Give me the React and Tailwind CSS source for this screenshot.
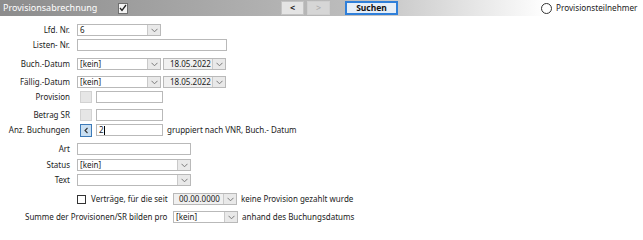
import React from "react";

const Chev = () => (
  <div className="w-[13px] h-full bg-[#e9e9e9] border-l border-[#c9c9c9] flex items-center justify-center shrink-0">
    <svg width="7" height="5" viewBox="0 0 7 5">
      <polyline points="0.5,0.8 3.5,3.8 6.5,0.8" fill="none" stroke="#7a7a7a" strokeWidth="1" />
    </svg>
  </div>
);

const Combo = ({ w, text = "", gray = false }) => (
  <div className={`h-full flex border border-[#b9b9b9] ${gray ? "bg-[#f0f0f0]" : "bg-white"}`} style={{ width: w }}>
    <div className="flex-1 pl-[2px] leading-[10px] flex items-center text-[#222] whitespace-nowrap">{text}</div>
    <Chev />
  </div>
);

const Input = ({ w, children }) => (
  <div className="h-full border border-[#b9b9b9] bg-white flex items-center pl-[2px]" style={{ width: w }}>
    {children}
  </div>
);

const Label = ({ children }) => (
  <div className="w-[70px] text-right shrink-0 text-[#222] whitespace-nowrap">{children}</div>
);

export default function App() {
  return (
    <div className="w-[643px] h-[240px] bg-white relative overflow-hidden text-[8px] leading-[12px] text-[#222]" style={{ fontFamily: '"Noto Sans", "Open Sans", sans-serif' }}>
      {/* header */}
      <div className="h-[16px] flex items-center bg-gradient-to-r from-[#8c8c8c] via-[#bdbdbd] via-55% to-[#ffffff] to-[85%]">
        <div className="pl-[3px] text-[9px] text-white w-[118px] whitespace-nowrap">Provisionsabrechnung</div>
        <div className="w-[10px] h-[11px] bg-[#f4f4f4] border border-[#6f6f6f] flex items-center justify-center">
          <svg width="8" height="8" viewBox="0 0 8 8">
            <polyline points="1,4 3,6.5 7,1" fill="none" stroke="#222" strokeWidth="1.3" />
          </svg>
        </div>
        <div className="ml-[153px] w-[23px] h-[14px] bg-[#e4e4e4] border border-[#c4c4c4] flex items-center justify-center text-[9px] font-bold text-[#222]">&lt;</div>
        <div className="ml-[3px] w-[23px] h-[14px] bg-[#d6d6d6] border border-[#cfcfcf] flex items-center justify-center text-[9px] text-[#a8a8a8]">&gt;</div>
        <div className="ml-[15px] w-[53px] h-[14px] bg-[#e6eef7] border-2 border-[#2f7fd9] flex items-center justify-center text-[8.5px] font-bold text-[#111]">Suchen</div>
        <div className="ml-[143px] w-[11px] h-[11px] rounded-full border border-[#333] bg-white"></div>
        <div className="ml-[4px] text-[8.2px] text-[#222] whitespace-nowrap">Provisionsteilnehmer</div>
      </div>

      {/* rows */}
      <div className="flex flex-col">
        <div className="mt-[8px] h-[12px] flex items-center">
          <Label>Lfd. Nr.</Label>
          <div className="ml-[7px] h-full"><Combo w={84} text="6" /></div>
        </div>
        <div className="mt-[3px] h-[12px] flex items-center">
          <Label>Listen- Nr.</Label>
          <div className="ml-[7px] h-full"><Input w={150} /></div>
        </div>
        <div className="mt-[7px] h-[12px] flex items-center">
          <Label>Buch.-Datum</Label>
          <div className="ml-[7px] h-full"><Combo w={84} text="[kein]" /></div>
          <div className="ml-[2px] h-full"><Combo w={63} text={<span className="pl-[4px]">18.05.2022</span>} gray /></div>
        </div>
        <div className="mt-[6px] h-[12px] flex items-center">
          <Label>Fällig.-Datum</Label>
          <div className="ml-[7px] h-full"><Combo w={84} text="[kein]" /></div>
          <div className="ml-[2px] h-full"><Combo w={63} text={<span className="pl-[4px]">18.05.2022</span>} gray /></div>
        </div>
        <div className="mt-[3px] h-[12px] flex items-center">
          <Label>Provision</Label>
          <div className="ml-[10px] w-[12px] h-full bg-[#e6e6e6] border border-[#d2d2d2]"></div>
          <div className="ml-[4px] h-full"><Input w={67} /></div>
        </div>
        <div className="mt-[6px] h-[12px] flex items-center">
          <Label>Betrag SR</Label>
          <div className="ml-[10px] w-[12px] h-full bg-[#e6e6e6] border border-[#d2d2d2]"></div>
          <div className="ml-[4px] h-full"><Input w={67} /></div>
        </div>
        <div className="mt-[3px] h-[12px] flex items-center">
          <Label>Anz. Buchungen</Label>
          <div className="ml-[10px] w-[12px] h-[13px] bg-[#c9dff2] border border-[#3d7ab8] flex items-center justify-center">
            <svg width="7" height="7" viewBox="0 0 7 7">
              <polyline points="4.5,1 2,3.5 4.5,6" fill="none" stroke="#333" strokeWidth="1.1" />
            </svg>
          </div>
          <div className="ml-[4px] h-full">
            <Input w={67}><span className="leading-[10px]">2</span><span className="w-px h-[9px] bg-black"></span></Input>
          </div>
          <div className="ml-[4px] whitespace-nowrap">gruppiert nach VNR, Buch.- Datum</div>
        </div>
        <div className="mt-[7px] h-[12px] flex items-center">
          <Label>Art</Label>
          <div className="ml-[7px] h-full"><Input w={114} /></div>
        </div>
        <div className="mt-[4px] h-[12px] flex items-center">
          <Label>Status</Label>
          <div className="ml-[7px] h-full"><Combo w={114} text="[kein]" /></div>
        </div>
        <div className="mt-[3px] h-[12px] flex items-center">
          <Label>Text</Label>
          <div className="ml-[7px] h-full"><Combo w={114} /></div>
        </div>
        <div className="mt-[7px] h-[12px] flex items-center">
          <div className="ml-[77px] w-[9px] h-[9px] border border-[#333] bg-white"></div>
          <div className="ml-[5px] w-[82px] whitespace-nowrap">Verträge, für die seit</div>
          <div className="h-full"><Combo w={64} text={<span className="pl-[3px]">00.00.0000</span>} gray /></div>
          <div className="ml-[4px] whitespace-nowrap">keine Provision gezahlt wurde</div>
        </div>
        <div className="mt-[6px] h-[12px] flex items-center">
          <div className="ml-[25px] w-[148px] whitespace-nowrap">Summe der Provisionen/SR bilden pro</div>
          <div className="h-full"><Combo w={65} text="[kein]" /></div>
          <div className="ml-[4px] whitespace-nowrap">anhand des Buchungsdatums</div>
        </div>
      </div>
    </div>
  );
}
